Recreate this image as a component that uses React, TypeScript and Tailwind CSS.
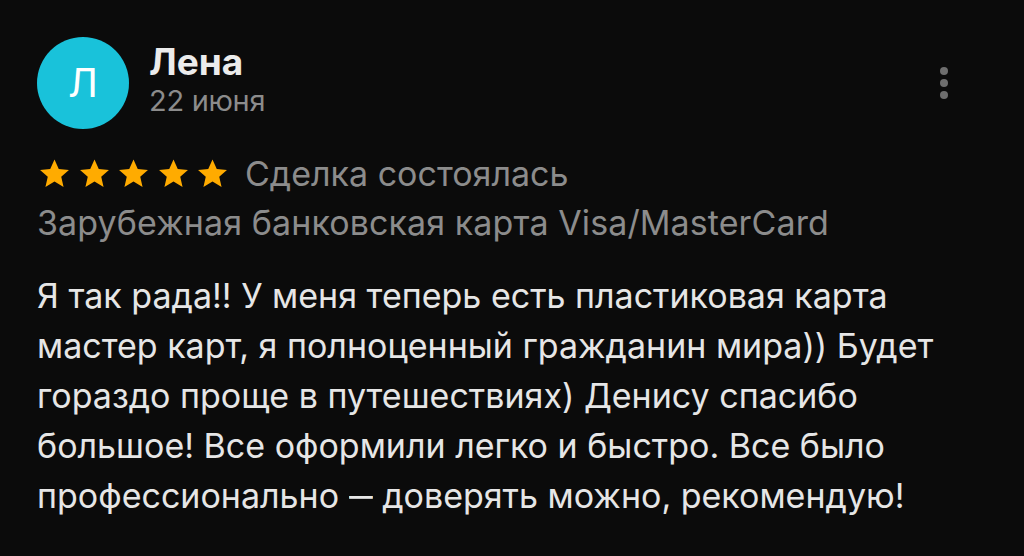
import React from "react";

function Star() {
  return (
    <svg width="33" height="33" viewBox="0 0 24 24">
      <path d="M12 1.8l3.1 6.9 7.4.7-5.6 5 1.7 7.4L12 17.9 5.4 21.8l1.7-7.4-5.6-5 7.4-.7z" fill="#ffab00" />
    </svg>
  );
}

export default function App() {
  return (
    <div className="w-[1024px] h-[556px] bg-[#0b0b0b] text-[#e6e6e6] overflow-hidden" style={{ fontFamily: "Inter, 'Noto Sans', sans-serif" }}>
      <div className="pl-[37px] pr-[60px] pt-[37px]">
        <div className="flex items-start">
          <div className="w-[92px] h-[92px] rounded-full bg-[#19c2da] flex items-center justify-center text-white text-[40px] leading-none">Л</div>
          <div className="ml-[20px] flex-1 pt-[3px]">
            <div className="text-[37px] font-bold leading-[44px] text-[#ececec]">Лена</div>
            <div className="text-[29px] leading-[34px] text-[#8c8c8c] tracking-[-0.3px]">22 июня</div>
          </div>
          <div className="flex flex-col gap-[4px] mt-[30px] mr-[16px]">
            <div className="w-[8px] h-[8px] rounded-full bg-[#6e6e6e]" />
            <div className="w-[8px] h-[8px] rounded-full bg-[#6e6e6e]" />
            <div className="w-[8px] h-[8px] rounded-full bg-[#6e6e6e]" />
          </div>
        </div>
        <div className="flex items-center mt-[24px] h-[40px]">
          <div className="flex gap-[6.5px] ml-[1px]">
            <Star /><Star /><Star /><Star /><Star />
          </div>
          <div className="ml-[16px] text-[34px] text-[#8c8c8c]">Сделка состоялась</div>
        </div>
        <div className="text-[34px] leading-[44px] text-[#8c8c8c] mt-[8px] tracking-[0.1px]">Зарубежная банковская карта Visa/MasterCard</div>
        <div className="text-[34px] leading-[50px] text-[#e6e6e6] mt-[26px]">
          <div>Я так рада!! У меня теперь есть пластиковая карта</div>
          <div>мастер карт, я полноценный гражданин мира)) Будет</div>
          <div>гораздо проще в путешествиях) Денису спасибо</div>
          <div>большое! Все оформили легко и быстро. Все было</div>
          <div>профессионально <span className="inline-block scale-x-[0.7] -mx-[5px]">—</span> доверять можно, рекомендую!</div>
        </div>
      </div>
    </div>
  );
}
